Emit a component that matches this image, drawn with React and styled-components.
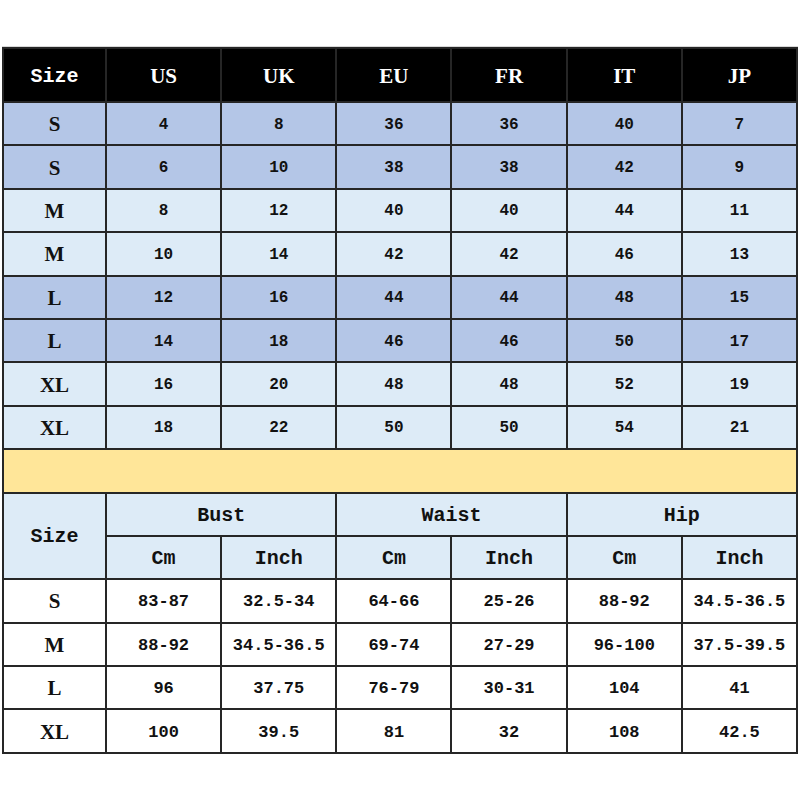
import React from "react";
import styled, { createGlobalStyle } from "styled-components";

const GlobalStyle = createGlobalStyle`
  html, body {
    margin: 0;
    padding: 0;
    background: #ffffff;
  }
`;

const Colors = {
  line: "#262626",
  dark: "#b4c6e7",
  light: "#ddebf7",
  yellow: "#ffe699",
  white: "#ffffff",
  black: "#000000",
};

const sizes = [
  { size: "S", tone: "dark", values: ["4", "8", "36", "36", "40", "7"] },
  { size: "S", tone: "dark", values: ["6", "10", "38", "38", "42", "9"] },
  { size: "M", tone: "light", values: ["8", "12", "40", "40", "44", "11"] },
  { size: "M", tone: "light", values: ["10", "14", "42", "42", "46", "13"] },
  { size: "L", tone: "dark", values: ["12", "16", "44", "44", "48", "15"] },
  { size: "L", tone: "dark", values: ["14", "18", "46", "46", "50", "17"] },
  { size: "XL", tone: "light", values: ["16", "20", "48", "48", "52", "19"] },
  { size: "XL", tone: "light", values: ["18", "22", "50", "50", "54", "21"] },
];

const countries = ["US", "UK", "EU", "FR", "IT", "JP"];

const measures = [
  { size: "S", values: ["83-87", "32.5-34", "64-66", "25-26", "88-92", "34.5-36.5"] },
  { size: "M", values: ["88-92", "34.5-36.5", "69-74", "27-29", "96-100", "37.5-39.5"] },
  { size: "L", values: ["96", "37.75", "76-79", "30-31", "104", "41"] },
  { size: "XL", values: ["100", "39.5", "81", "32", "108", "42.5"] },
];

export default function App() {
  return (
    <Page>
      <GlobalStyle />
      <Chart>
        <HeadCell mono>Size</HeadCell>
        {countries.map((c) => (
          <HeadCell key={c}>{c}</HeadCell>
        ))}

        {sizes.map((row, i) => (
          <React.Fragment key={i}>
            <Cell tone={row.tone}>
              <Label>{row.size}</Label>
            </Cell>
            {row.values.map((v, j) => (
              <Cell key={j} tone={row.tone}>
                <Num>{v}</Num>
              </Cell>
            ))}
          </React.Fragment>
        ))}

        <Band />

        <Cell tone="light" rowSpan={2}>
          <Word>Size</Word>
        </Cell>
        {["Bust", "Waist", "Hip"].map((m) => (
          <Cell key={m} tone="light" colSpan={2}>
            <Word>{m}</Word>
          </Cell>
        ))}
        {["Bust", "Waist", "Hip"].map((m) => (
          <React.Fragment key={m}>
            <Cell tone="light">
              <Word>Cm</Word>
            </Cell>
            <Cell tone="light">
              <Word>Inch</Word>
            </Cell>
          </React.Fragment>
        ))}

        {measures.map((row, i) => (
          <React.Fragment key={i}>
            <Cell tone="white">
              <Label>{row.size}</Label>
            </Cell>
            {row.values.map((v, j) => (
              <Cell key={j} tone="white">
                <Num wide>{v}</Num>
              </Cell>
            ))}
          </React.Fragment>
        ))}
      </Chart>
    </Page>
  );
}

const Page = styled.div`
  padding: 46px 0 0 2px;
  width: 800px;
  height: 800px;
  box-sizing: border-box;
`;

const Chart = styled.div`
  width: 796px;
  box-sizing: border-box;
  display: grid;
  grid-template-columns: 101px repeat(6, 1fr);
  grid-template-rows: 52px repeat(15, 41.4px);
  gap: 2px;
  padding: 2px;
  background: ${Colors.line};
  border-top: 1px solid #d8d8d8;
`;

const Cell = styled.div`
  display: flex;
  align-items: center;
  justify-content: center;
  background: ${(p) => Colors[p.tone]};
  grid-row: ${(p) => (p.rowSpan ? `span ${p.rowSpan}` : "auto")};
  grid-column: ${(p) => (p.colSpan ? `span ${p.colSpan}` : "auto")};
  color: #111;
`;

const HeadCell = styled.div`
  display: flex;
  align-items: center;
  justify-content: center;
  background: ${Colors.black};
  color: #ffffff;
  font-family: ${(p) =>
    p.mono ? `"Liberation Mono", monospace` : `"Liberation Serif", serif`};
  font-weight: bold;
  font-size: ${(p) => (p.mono ? "20px" : "21px")};
  padding-top: 2px;
`;

const Band = styled.div`
  grid-column: 1 / -1;
  background: ${Colors.yellow};
`;

const Label = styled.span`
  font-family: "Liberation Serif", serif;
  font-weight: bold;
  font-size: 21px;
  padding-top: 2px;
`;

const Word = styled.span`
  font-family: "Liberation Mono", monospace;
  font-weight: bold;
  font-size: 20px;
  padding-top: 2px;
`;

const Num = styled.span`
  font-family: "Liberation Mono", monospace;
  font-weight: bold;
  font-size: ${(p) => (p.wide ? "17px" : "16px")};
  padding-top: 2px;
`;
